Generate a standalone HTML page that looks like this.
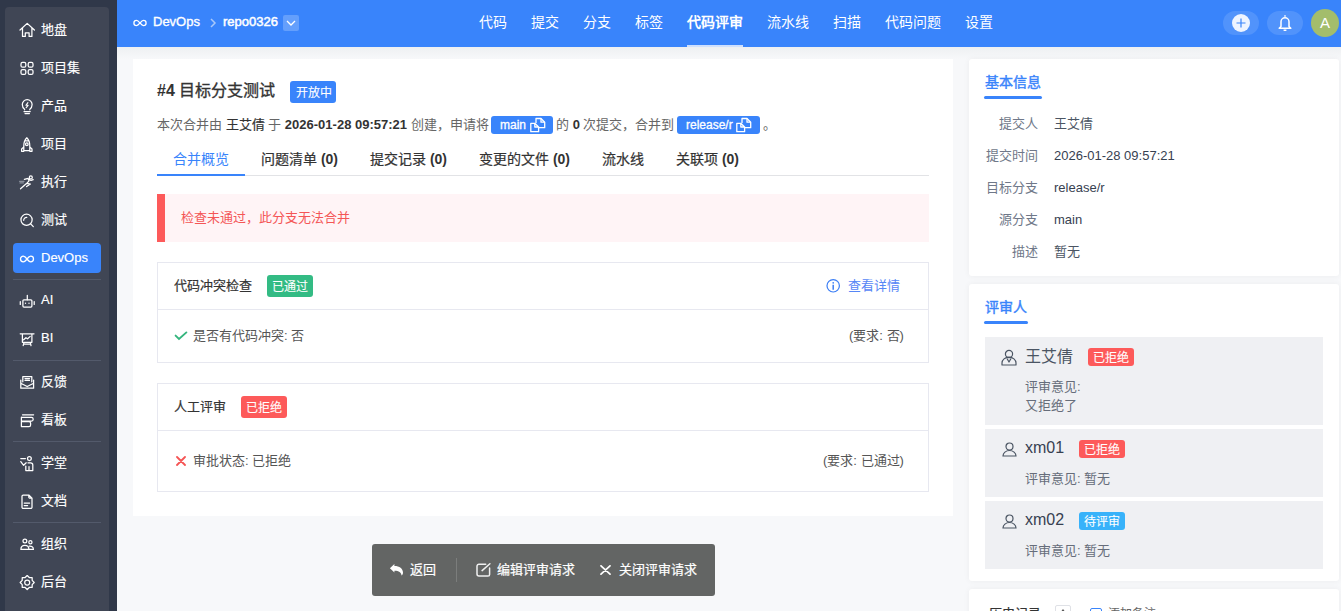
<!DOCTYPE html>
<html lang="zh-CN"><head><meta charset="utf-8">
<style>
*{box-sizing:border-box;margin:0;padding:0}
html,body{width:1341px;height:611px;overflow:hidden}
body{font-family:"Liberation Sans",sans-serif;background:#f7f8fa;position:relative;color:#333}
.abs{position:absolute}
/* sidebar */
#side{position:absolute;left:0;top:0;width:117px;height:611px;background:#303849}
#sidein{position:absolute;left:5px;top:7px;width:104px;height:620px;background:#404655;border-radius:4px}
.si{position:absolute;left:0;width:117px;height:20px;color:#fff;font-size:13px;line-height:20px}
.si span{position:absolute;left:41px;top:0;white-space:nowrap}
.si svg{position:absolute;left:19px;top:2px;width:16px;height:16px}
.sep{position:absolute;left:13px;width:88px;height:1px;background:#535a6b}
#devops{position:absolute;left:13px;top:243px;width:88px;height:30px;background:#3984fb;border-radius:4px}
/* header */
#hdr{position:absolute;left:117px;top:0;width:1224px;height:47px;background:#3984fb}
#shadow{position:absolute;left:117px;top:47px;width:1224px;height:12px;background:linear-gradient(#eef0f2,#f7f8fa)}
.nav{position:absolute;top:12px;color:#fff;font-size:14px;line-height:20px;white-space:nowrap}
/* card */
.card{position:absolute;background:#fff}
.t13{font-size:13px;line-height:18px;white-space:nowrap}
.badge{position:absolute;color:#fff;font-size:12px;text-align:center;border-radius:3px;white-space:nowrap;-webkit-text-stroke-width:0.1px}
.m{-webkit-text-stroke-width:0.22px}
.m b{-webkit-text-stroke-width:0}
.si span{-webkit-text-stroke-width:0.15px}
</style></head><body>

<div id="side">
  <div id="sidein"></div>
  <div id="devops"></div>
  <div class="sep" style="top:279px"></div>
  <div class="sep" style="top:360px"></div>
  <div class="sep" style="top:441px"></div>
  <div class="sep" style="top:522px"></div>

  <div class="si" style="top:20px"><svg style="top:2px" viewBox="0 0 16 16" fill="none" stroke="#fff" stroke-width="1.25" stroke-linecap="round" stroke-linejoin="round"><path d="M1 8 L8.2 1.4 L15.4 8 M3.5 6 V14.4 H6.3 V10.8 H10.1 V14.4 H12.9 V6"/></svg><span>地盘</span></div>
  <div class="si" style="top:58px"><svg style="top:2px" viewBox="0 0 16 16" fill="none" stroke="#fff" stroke-width="1.25" stroke-linecap="round" stroke-linejoin="round"><rect x="2" y="2.4" width="4.8" height="4.8" rx="1.5"/><rect x="9.2" y="2.4" width="4.8" height="4.8" rx="1.5"/><rect x="2" y="9.6" width="4.8" height="4.8" rx="1.5"/><rect x="9.2" y="9.6" width="4.8" height="4.8" rx="1.5"/></svg><span>项目集</span></div>
  <div class="si" style="top:96px"><svg style="top:3px" viewBox="0 0 16 16" fill="none" stroke="#fff" stroke-width="1.25" stroke-linecap="round" stroke-linejoin="round"><path d="M5.6 10.8 V10.2 C4 9.2 3.3 7.6 3.3 5.6 A4.9 4.9 0 0 1 13.1 5.6 C13.1 7.6 12.4 9.2 10.8 10.2 V10.8 M5 12.6 H11.2 M6 14.5 H10.4"/><path d="M8.9 3.6 L6.9 6.3 H9.1 L7.2 8.7" stroke-width="1.1"/></svg><span>产品</span></div>
  <div class="si" style="top:134px"><svg style="top:3px" viewBox="0 0 16 16" fill="none" stroke="#fff" stroke-width="1.25" stroke-linecap="round" stroke-linejoin="round"><path d="M7.8 0.8 C5.5 3 4.8 6 4.8 9 V13.5 H10.8 V9 C10.8 6 10.1 3 7.8 0.8 Z M4.8 10 L2.6 12 V14.3 H4.8 M10.8 10 L13 12 V14.3 H10.8 M6 3.8 H9.6"/><circle cx="7.8" cy="7.2" r="1.3"/></svg><span>项目</span></div>
  <div class="si" style="top:172px"><svg style="top:3px" viewBox="0 0 16 16" fill="none" stroke="#fff" stroke-width="1.25" stroke-linecap="round" stroke-linejoin="round"><path d="M1.5 13.8 L7.8 8.2 M5.4 4.4 L9 3.4 L12 5.4 L14.2 4.6 M9 3.4 L10 5.8 L7.8 8.4 L11.4 9 L7.6 11.6"/><circle cx="11.8" cy="2.4" r="1.5"/><path d="M0.6 6.3 H5 M1 7.9 H4.4" stroke="#8a909c"/></svg><span>执行</span></div>
  <div class="si" style="top:210px"><svg style="top:3px" viewBox="0 0 16 16" fill="none" stroke="#fff" stroke-width="1.25" stroke-linecap="round" stroke-linejoin="round"><circle cx="7.55" cy="6.8" r="5.6"/><path d="M11.7 10.9 L14.3 13.6 M4.7 7.3 A3 3 0 0 1 7.8 4.3"/></svg><span>测试</span></div>
  <div class="si" style="top:248px"><svg style="top:3px" viewBox="0 0 16 16" fill="none" stroke="#fff" stroke-width="1.25" stroke-linecap="round" stroke-linejoin="round"><path d="M8 8 C6.5 6 5.8 5.2 4.3 5.2 A2.8 2.8 0 0 0 4.3 10.8 C5.8 10.8 6.5 10 8 8 C9.5 6 10.2 5.2 11.7 5.2 A2.8 2.8 0 0 1 11.7 10.8 C10.2 10.8 9.5 10 8 8 Z" stroke-width="1.3"/></svg><span>DevOps</span></div>
  <div class="si" style="top:290px"><svg style="top:4px" viewBox="0 0 16 16" fill="none" stroke="#fff" stroke-width="1.25" stroke-linecap="round" stroke-linejoin="round"><rect x="3.9" y="5.8" width="9" height="7.3" rx="1"/><path d="M8.3 1.3 V5.8 M1.3 7.6 V10.4 M15.2 7.6 V10.4"/><circle cx="6.5" cy="9.3" r="0.7" fill="#fff" stroke="none"/><circle cx="10" cy="9.3" r="0.7" fill="#fff" stroke="none"/></svg><span>AI</span></div>
  <div class="si" style="top:328px"><svg style="top:4px" viewBox="0 0 16 16" fill="none" stroke="#fff" stroke-width="1.25" stroke-linecap="round" stroke-linejoin="round"><path d="M1.2 1.8 H15 M3.4 1.8 V10.3 H12.9 V1.8 M4.6 7.8 L6.9 5.7 L8.6 6.8 L11.2 4.4 M5 10.3 L4.2 13.6 M11.3 10.3 L12 13.6 M4.6 12 H11.6"/></svg><span>BI</span></div>
  <div class="si" style="top:372px"><svg style="top:3px" viewBox="0 0 16 16" fill="none" stroke="#fff" stroke-width="1.25" stroke-linecap="round" stroke-linejoin="round"><path d="M3.8 6.8 V1.5 H12.8 V6.8 M1.8 5 V13.2 H14.6 V5 M2.2 8.5 L8.2 11.5 L14.2 8.5 M6 3.6 H10.5 M6 5.4 H10.5"/></svg><span>反馈</span></div>
  <div class="si" style="top:410px"><svg style="top:3px" viewBox="0 0 16 16" fill="none" stroke="#fff" stroke-width="1.25" stroke-linecap="round" stroke-linejoin="round"><path d="M3.5 1.8 H14.6 M2.4 4.2 V13.6 M2.4 4.4 H12.4 A1.8 1.8 0 0 1 12.4 8 H2.4 M2.4 8.6 H10 A1.6 1.6 0 0 1 11.6 10.2 V12 A1.6 1.6 0 0 1 10 13.6 H2.4"/></svg><span>看板</span></div>
  <div class="si" style="top:453px"><svg style="top:3px" viewBox="0 0 16 16" fill="none" stroke="#fff" stroke-width="1.25" stroke-linecap="round" stroke-linejoin="round"><path d="M1.8 2.5 H6.4 M1.8 5.6 L4.6 9.3 L7.2 6.8 M6.8 10 V14.6 H13.8 V9 A2.2 2.2 0 0 0 11.6 6.8 H9 M10 10.5 V14.6"/><circle cx="10.4" cy="2.6" r="1.9"/></svg><span>学堂</span></div>
  <div class="si" style="top:491px"><svg style="top:3px" viewBox="0 0 16 16" fill="none" stroke="#fff" stroke-width="1.25" stroke-linecap="round" stroke-linejoin="round"><path d="M4.2 1 H9.8 L13 4.2 V13.2 A1.2 1.2 0 0 1 11.8 14.4 H4.2 A1.2 1.2 0 0 1 3 13.2 V2.2 A1.2 1.2 0 0 1 4.2 1 Z M9.8 1 V3 A1.2 1.2 0 0 0 11 4.2 H13 M5.2 9 H10.6 M5.2 11.6 H8.6"/></svg><span>文档</span></div>
  <div class="si" style="top:534px"><svg style="top:3px" viewBox="0 0 16 16" fill="none" stroke="#fff" stroke-width="1.25" stroke-linecap="round" stroke-linejoin="round"><circle cx="5.9" cy="4" r="1.9"/><path d="M1.9 12.4 C1.9 9.8 3.6 8.4 5.9 8.4 C8.2 8.4 9.9 9.8 9.9 12.4 Z"/><circle cx="11.4" cy="5.2" r="1.6"/><path d="M10.2 9.2 C12.6 9 14.4 10 14.4 12.4 H10.2"/></svg><span>组织</span></div>
  <div class="si" style="top:572px"><svg style="top:3px" viewBox="0 0 16 16" fill="none" stroke="#fff" stroke-width="1.25" stroke-linecap="round" stroke-linejoin="round"><path d="M8.20 0.50 L10.27 2.51 L13.15 2.55 L13.19 5.43 L15.20 7.50 L13.19 9.57 L13.15 12.45 L10.27 12.49 L8.20 14.50 L6.13 12.49 L3.25 12.45 L3.21 9.57 L1.20 7.50 L3.21 5.43 L3.25 2.55 L6.13 2.51 Z"/><circle cx="8.2" cy="7.5" r="2.5"/></svg><span>后台</span></div>
</div>

<div id="hdr">
  <svg class="abs" style="left:16px;top:19px" width="14" height="8" viewBox="0 0 14 8" fill="none" stroke="#fff" stroke-width="1.3"><path d="M7 4 C5.8 2.5 5 1.4 3.5 1.4 A2.6 2.6 0 0 0 3.5 6.6 C5 6.6 5.8 5.5 7 4 C8.2 2.5 9 1.4 10.5 1.4 A2.6 2.6 0 0 1 10.5 6.6 C9 6.6 8.2 5.5 7 4 Z"/></svg>
  <div class="abs" style="left:36px;top:12px;color:#fff;font-size:13px;line-height:20px;-webkit-text-stroke-width:0.35px">DevOps</div>
  <svg class="abs" style="left:92px;top:18px" width="8" height="10" viewBox="0 0 8 10" fill="none" stroke="#a9c8fa" stroke-width="1.5"><path d="M2 1 L6 5 L2 9"/></svg>
  <div class="abs" style="left:106px;top:12px;color:#fff;font-size:13px;line-height:20px;-webkit-text-stroke-width:0.5px">repo0326</div>
  <div class="abs" style="left:166px;top:15px;width:16px;height:16px;background:rgba(255,255,255,.22);border-radius:2px"></div>
  <svg class="abs" style="left:169px;top:20px" width="10" height="7" viewBox="0 0 10 7" fill="none" stroke="#fff" stroke-width="1.3"><path d="M1 1 L5 5 L9 1"/></svg>

  <div class="nav" style="left:362px">代码</div>
  <div class="nav" style="left:414px">提交</div>
  <div class="nav" style="left:466px">分支</div>
  <div class="nav" style="left:518px">标签</div>
  <div class="nav" style="left:570px;font-weight:bold">代码评审</div>
  <div class="abs" style="left:570px;top:45px;width:56px;height:2px;background:#cfe0fd"></div>
  <div class="nav" style="left:650px">流水线</div>
  <div class="nav" style="left:716px">扫描</div>
  <div class="nav" style="left:768px">代码问题</div>
  <div class="nav" style="left:848px">设置</div>

  <div class="abs" style="left:1106px;top:11px;width:36px;height:24px;border-radius:12px;background:rgba(255,255,255,.12)"></div>
  <div class="abs" style="left:1115px;top:14px;width:18px;height:18px;border-radius:50%;background:#eef4ff"></div>
  <svg class="abs" style="left:1119px;top:18px" width="10" height="10" viewBox="0 0 10 10" stroke="#3984fb" stroke-width="1.2"><path d="M5 0.5 V9.5 M0.5 5 H9.5"/></svg>
  <div class="abs" style="left:1150px;top:11px;width:36px;height:24px;border-radius:12px;background:rgba(255,255,255,.12)"></div>
  <svg class="abs" style="left:1161px;top:14px" width="14" height="18" viewBox="0 0 14 18" fill="none" stroke="#fff" stroke-width="1.5" stroke-linejoin="round"><path d="M7 1.2 V2.8 M3 12.5 V7.8 A4 4 0 0 1 11 7.8 V12.5 L12.8 14.2 H1.2 Z M5.6 16.2 H8.4"/></svg>
  <div class="abs" style="left:1194px;top:9px;width:28px;height:28px;border-radius:50%;background:#a3bd6c;color:#fff;font-size:15px;line-height:28px;text-align:center">A</div>
</div>
<div id="shadow"></div>

<!-- main card -->
<div class="card" style="left:133px;top:59px;width:820px;height:457px"></div>
<div class="abs" style="left:157px;top:80px;font-size:16px;line-height:22px;color:#333;white-space:nowrap"><b style="font-weight:bold">#4</b> <span style="-webkit-text-stroke-width:0.35px">目标分支测试</span></div>
<div class="badge" style="left:290px;top:81px;width:46px;height:22px;line-height:24px;background:#3984fb;padding-left:1px">开放中</div>

<div class="abs t13" style="left:157px;top:116px;color:#666">本次合并由 <span style="color:#333;-webkit-text-stroke-width:0.2px">王艾倩</span> 于 <b style="color:#333">2026-01-28 09:57:21</b> 创建，申请将</div>
<div class="badge" style="left:491px;top:116px;width:62px;height:18px;line-height:18px;background:#3984fb;text-align:left;padding-left:9px;-webkit-text-stroke-width:0.3px">main</div>
<svg class="abs" style="left:530px;top:117px" width="16" height="16" viewBox="0 0 16 16" fill="none" stroke="#fff" stroke-width="1.3" stroke-linejoin="round"><path d="M6 6 V1.5 H11 L14.7 5.2 V10.7 H9"/><path d="M11 1.5 V5.2 H14.7"/><path d="M0.8 6.3 H4.8 L8.6 10 V14.7 H0.8 Z M4.8 6.3 V10 H8.6"/></svg>
<div class="abs t13" style="left:556px;top:116px;color:#666">的 <b style="color:#333">0</b> 次提交，合并到</div>
<div class="badge" style="left:677px;top:116px;width:83px;height:18px;line-height:18px;background:#3984fb;text-align:left;padding-left:9px;-webkit-text-stroke-width:0.3px">release/r</div>
<svg class="abs" style="left:736px;top:117px" width="16" height="16" viewBox="0 0 16 16" fill="none" stroke="#fff" stroke-width="1.3" stroke-linejoin="round"><path d="M6 6 V1.5 H11 L14.7 5.2 V10.7 H9"/><path d="M11 1.5 V5.2 H14.7"/><path d="M0.8 6.3 H4.8 L8.6 10 V14.7 H0.8 Z M4.8 6.3 V10 H8.6"/></svg>
<div class="abs t13" style="left:763px;top:116px;color:#666">。</div>

<!-- tabs -->
<div class="abs" style="left:157px;top:175px;width:772px;height:1px;background:#e2e3e6"></div>
<div class="abs" style="left:157px;top:174px;width:88px;height:2px;background:#3984fb"></div>
<div class="abs" style="left:173px;top:149px;font-size:14px;line-height:20px;color:#3984fb;white-space:nowrap">合并概览</div>
<div class="abs m" style="left:261px;top:149px;font-size:14px;line-height:20px;color:#333;white-space:nowrap">问题清单 <b>(0)</b></div>
<div class="abs m" style="left:370px;top:149px;font-size:14px;line-height:20px;color:#333;white-space:nowrap">提交记录 <b>(0)</b></div>
<div class="abs m" style="left:479px;top:149px;font-size:14px;line-height:20px;color:#333;white-space:nowrap">变更的文件 <b>(0)</b></div>
<div class="abs m" style="left:602px;top:149px;font-size:14px;line-height:20px;color:#333;white-space:nowrap">流水线</div>
<div class="abs m" style="left:676px;top:149px;font-size:14px;line-height:20px;color:#333;white-space:nowrap">关联项 <b>(0)</b></div>

<!-- alert -->
<div class="abs" style="left:157px;top:194px;width:772px;height:48px;background:#fff4f6"></div>
<div class="abs" style="left:157px;top:194px;width:8px;height:48px;background:#fd5a5a"></div>
<div class="abs t13" style="left:181px;top:209px;color:#f45656">检查未通过，此分支无法合并</div>

<!-- check card 1 -->
<div class="abs" style="left:157px;top:262px;width:772px;height:101px;border:1px solid #e7e8f0"></div>
<div class="abs" style="left:158px;top:309px;width:770px;height:1px;background:#e7e8f0"></div>
<div class="abs t13" style="left:174px;top:277px;color:#333;-webkit-text-stroke-width:0.2px">代码冲突检查</div>
<div class="badge" style="left:267px;top:275px;width:46px;height:22px;line-height:24px;background:#33bb84">已通过</div>
<svg class="abs" style="left:826px;top:279px" width="15" height="15" viewBox="0 0 15 15" fill="none" stroke="#3b7ef5" stroke-width="1.2"><circle cx="7.2" cy="6.8" r="6.2"/><path d="M7.2 5.8 V10.7" stroke-width="1.5"/><circle cx="7.2" cy="3.8" r="0.85" fill="#3b7ef5" stroke="none"/></svg>
<div class="abs t13" style="left:848px;top:277px;color:#5686f6">查看详情</div>
<svg class="abs" style="left:174px;top:331px" width="14" height="10" viewBox="0 0 14 10" fill="none" stroke="#34b57d" stroke-width="1.9" stroke-linecap="round"><path d="M1.6 4.6 L5 8 L12.4 1.4"/></svg>
<div class="abs t13" style="left:193px;top:327px;color:#555">是否有代码冲突: 否</div>
<div class="abs t13" style="left:849px;top:327px;color:#555">(要求: 否)</div>

<!-- check card 2 -->
<div class="abs" style="left:157px;top:383px;width:772px;height:109px;border:1px solid #e7e8f0"></div>
<div class="abs" style="left:158px;top:430px;width:770px;height:1px;background:#e7e8f0"></div>
<div class="abs t13" style="left:174px;top:398px;color:#333;-webkit-text-stroke-width:0.2px">人工评审</div>
<div class="badge" style="left:241px;top:396px;width:46px;height:22px;line-height:24px;background:#fd5a5a">已拒绝</div>
<svg class="abs" style="left:176px;top:456px" width="10" height="10" viewBox="0 0 10 10" fill="none" stroke="#f55454" stroke-width="1.8" stroke-linecap="round"><path d="M1 1 L9 9 M9 1 L1 9"/></svg>
<div class="abs t13" style="left:193px;top:452px;color:#555">审批状态: 已拒绝</div>
<div class="abs t13" style="left:823px;top:452px;color:#555">(要求: 已通过)</div>

<!-- action bar -->
<div class="abs" style="left:372px;top:544px;width:343px;height:52px;background:#636564;border-radius:3px"></div>
<svg class="abs" style="left:389px;top:563px" width="14" height="14" viewBox="0 0 14 14" fill="#fff"><path d="M0.9 5.2 L5.4 0.9 V2.9 C10.5 2.9 14 5.5 14 9.5 C14 10.8 13.5 11.8 12.6 12.5 C12.3 9.8 10 7.8 5.4 7.8 V9.5 Z"/></svg>
<div class="abs t13" style="left:410px;top:561px;color:#fff;-webkit-text-stroke-width:0.2px">返回</div>
<div class="abs" style="left:456px;top:558px;width:1px;height:24px;background:#7b7d7c"></div>
<svg class="abs" style="left:476px;top:563px" width="15" height="14" viewBox="0 0 15 14" fill="none" stroke="#f0f0f0" stroke-width="1.5" stroke-linecap="round"><path d="M9.7 1.2 H3 A2 2 0 0 0 1 3.2 V11 A2 2 0 0 0 3 13 H12 A1.6 1.6 0 0 0 13.6 11.4 V5"/><path d="M6.1 7.6 L13.9 0.8"/></svg>
<div class="abs t13" style="left:497px;top:561px;color:#fff;-webkit-text-stroke-width:0.2px">编辑评审请求</div>
<svg class="abs" style="left:600px;top:565px" width="11" height="10" viewBox="0 0 11 10" fill="none" stroke="#fff" stroke-width="1.7" stroke-linecap="round"><path d="M1 0.8 L10 9.2 M10 0.8 L1 9.2"/></svg>
<div class="abs t13" style="left:619px;top:561px;color:#fff;-webkit-text-stroke-width:0.2px">关闭评审请求</div>

<!-- right panel -->
<div class="card" style="left:969px;top:59px;width:370px;height:217px;border-radius:3px;box-shadow:0 0 6px rgba(0,0,0,.05)"></div>
<div class="abs m" style="left:985px;top:72px;font-size:14px;line-height:20px;color:#3984fb;-webkit-text-stroke-width:0.4px">基本信息</div>
<div class="abs" style="left:984px;top:96px;width:58px;height:3px;background:#3984fb;border-radius:2px"></div>
<div class="abs t13" style="left:969px;top:115px;width:69px;text-align:right;color:#6f7889">提交人</div>
<div class="abs t13" style="left:1054px;top:115px;color:#4b5563">王艾倩</div>
<div class="abs t13" style="left:969px;top:147px;width:69px;text-align:right;color:#6f7889">提交时间</div>
<div class="abs t13" style="left:1054px;top:147px;color:#374151">2026-01-28 09:57:21</div>
<div class="abs t13" style="left:969px;top:179px;width:69px;text-align:right;color:#6f7889">目标分支</div>
<div class="abs t13" style="left:1054px;top:179px;color:#374151">release/r</div>
<div class="abs t13" style="left:969px;top:211px;width:69px;text-align:right;color:#6f7889">源分支</div>
<div class="abs t13" style="left:1054px;top:211px;color:#374151">main</div>
<div class="abs t13" style="left:969px;top:243px;width:69px;text-align:right;color:#6f7889">描述</div>
<div class="abs t13" style="left:1054px;top:243px;color:#4b5563">暂无</div>

<div class="card" style="left:969px;top:284px;width:370px;height:297px;border-radius:3px;box-shadow:0 0 6px rgba(0,0,0,.05)"></div>
<div class="abs m" style="left:985px;top:297px;font-size:14px;line-height:20px;color:#3984fb;-webkit-text-stroke-width:0.4px">评审人</div>
<div class="abs" style="left:984px;top:321px;width:44px;height:3px;background:#3984fb;border-radius:2px"></div>

<div class="abs" style="left:985px;top:337px;width:338px;height:88px;background:#eff0f3"></div>
<svg class="abs" style="left:1001px;top:349px" width="16" height="17" viewBox="0 0 16 17" fill="none" stroke="#4b5563" stroke-width="1.2" stroke-linejoin="round"><circle cx="8" cy="5" r="3.6"/><path d="M1 16 V14 A6 5 0 0 1 15 14 V16 Z M6 9.5 L8 13 L10 9.5"/></svg>
<div class="abs" style="left:1025px;top:347px;font-size:16px;line-height:20px;color:#4b5563">王艾倩</div>
<div class="badge" style="left:1088px;top:348px;width:46px;height:18px;line-height:20px;background:#fd5a5a">已拒绝</div>
<div class="abs t13" style="left:1025px;top:378px;color:#666d7a">评审意见:</div>
<div class="abs t13" style="left:1025px;top:397px;color:#666d7a">又拒绝了</div>

<div class="abs" style="left:985px;top:429px;width:338px;height:68px;background:#eff0f3"></div>
<svg class="abs" style="left:1002px;top:442px" width="15" height="15" viewBox="0 0 15 15" fill="none" stroke="#4b5563" stroke-width="1.2"><circle cx="7.5" cy="4.5" r="3.5"/><path d="M1 14 A6.5 5.5 0 0 1 14 14 Z"/></svg>
<div class="abs" style="left:1025px;top:438px;font-size:16px;line-height:20px;color:#374151">xm01</div>
<div class="badge" style="left:1079px;top:440px;width:46px;height:18px;line-height:20px;background:#fd5a5a">已拒绝</div>
<div class="abs t13" style="left:1025px;top:470px;color:#666d7a">评审意见: 暂无</div>

<div class="abs" style="left:985px;top:501px;width:338px;height:68px;background:#eff0f3"></div>
<svg class="abs" style="left:1002px;top:514px" width="15" height="15" viewBox="0 0 15 15" fill="none" stroke="#4b5563" stroke-width="1.2"><circle cx="7.5" cy="4.5" r="3.5"/><path d="M1 14 A6.5 5.5 0 0 1 14 14 Z"/></svg>
<div class="abs" style="left:1025px;top:510px;font-size:16px;line-height:20px;color:#374151">xm02</div>
<div class="badge" style="left:1079px;top:512px;width:46px;height:18px;line-height:20px;background:#38b2fa">待评审</div>
<div class="abs t13" style="left:1025px;top:542px;color:#666d7a">评审意见: 暂无</div>

<div class="card" style="left:969px;top:589px;width:370px;height:40px;border-radius:3px;box-shadow:0 0 6px rgba(0,0,0,.05)"></div>
<div class="abs m" style="left:989px;top:604px;font-size:13px;line-height:20px;color:#333;white-space:nowrap">历史记录</div>
<div class="abs" style="left:1055px;top:605px;width:16px;height:16px;border:1px solid #dfe1e6;border-radius:2px;background:#fff"></div>
<svg class="abs" style="left:1059px;top:608px" width="8" height="6" viewBox="0 0 8 6" fill="#555"><path d="M4 1 L7 5 H1 Z"/></svg>
<div class="abs" style="left:1090px;top:608px;width:12px;height:12px;border:1.5px solid #3984fb;border-radius:2px"></div>
<div class="abs" style="left:1108px;top:605px;font-size:12px;line-height:18px;color:#666;white-space:nowrap">添加备注</div>

</body></html>
